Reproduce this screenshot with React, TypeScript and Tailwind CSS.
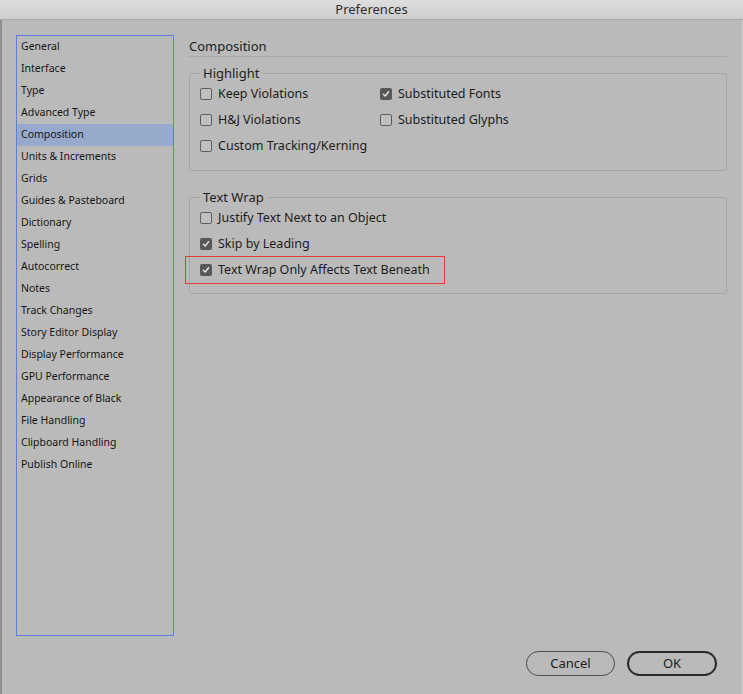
import React from 'react';

const sections = [
  'General',
  'Interface',
  'Type',
  'Advanced Type',
  'Composition',
  'Units & Increments',
  'Grids',
  'Guides & Pasteboard',
  'Dictionary',
  'Spelling',
  'Autocorrect',
  'Notes',
  'Track Changes',
  'Story Editor Display',
  'Display Performance',
  'GPU Performance',
  'Appearance of Black',
  'File Handling',
  'Clipboard Handling',
  'Publish Online',
];

const font = { fontFamily: '"Lucida Grande", "Noto Sans", "DejaVu Sans", sans-serif' };

function Checkbox({ checked }: { checked?: boolean }) {
  if (checked) {
    return (
      <span className="flex h-[12px] w-[12px] shrink-0 items-center justify-center rounded-[2px] bg-[#585858]">
        <svg width="8" height="8" viewBox="0 0 8 8" fill="none">
          <path d="M1.4 4.2 L3.2 6 L6.6 1.8" stroke="#e6e6e6" strokeWidth="1.4" strokeLinecap="round" strokeLinejoin="round" />
        </svg>
      </span>
    );
  }
  return <span className="h-[12px] w-[12px] shrink-0 rounded-[2px] border border-[#5e5e5e] bg-[#bfbfbf]" />;
}

function Option({ label, checked }: { label: string; checked?: boolean }) {
  return (
    <div className="flex h-[26px] items-center gap-[6px] text-[12.5px] text-[#1c1c1c]">
      <Checkbox checked={checked} />
      <span>{label}</span>
    </div>
  );
}

function Group({ title, children, className }: { title: string; children: React.ReactNode; className?: string }) {
  return (
    <fieldset className={`rounded-[3px] border border-[#a6a6a6] pl-[10px] ${className ?? ''}`}>
      <legend className="px-[3px] text-[13px] leading-[15px] text-[#1c1c1c]">{title}</legend>
      {children}
    </fieldset>
  );
}

export default function App() {
  return (
    <div className="flex h-[694px] w-[743px] flex-col bg-[#bababa]" style={font}>
      {/* title bar */}
      <div className="flex h-[20px] shrink-0 items-center justify-center border-b border-[#a9a9a9] bg-gradient-to-b from-[#dedede] to-[#cdcdcd] text-[13px] text-[#2e2e2e]">
        Preferences
      </div>

      <div className="flex flex-1 flex-col border-l-2 border-r border-l-[#8f8f8f] border-r-[#cfcfcf]">
        <div className="flex">
          {/* sidebar */}
          <div className="ml-[14px] mt-[15px] h-[601px] w-[158px] border border-[#5a7fdc]">
            {sections.map((s) => (
              <div
                key={s}
                className={`flex h-[22px] items-center pb-[1px] pl-[4px] text-[10.5px] text-[#161616] ${
                  s === 'Composition' ? 'bg-[#97aacb]' : ''
                }`}
              >
                {s}
              </div>
            ))}
          </div>

          {/* content */}
          <div className="ml-[15px] mt-[17px] w-[538px]">
            <div className="h-[20px] border-b border-[#a9a9a9] text-[13px] leading-[18px] text-[#1c1c1c]">Composition</div>

            <Group title="Highlight" className="mt-[9px] pb-[11px]">
              <div className="grid grid-cols-[180px_1fr]">
                <Option label="Keep Violations" />
                <Option label="Substituted Fonts" checked />
                <Option label="H&J Violations" />
                <Option label="Substituted Glyphs" />
                <Option label="Custom Tracking/Kerning" />
              </div>
            </Group>

            <Group title="Text Wrap" className="mt-[19px] pb-[10px]">
              <Option label="Justify Text Next to an Object" />
              <Option label="Skip by Leading" checked />
              <div className="relative">
                <Option label="Text Wrap Only Affects Text Beneath" checked />
                <div className="pointer-events-none absolute left-[-15px] top-[-1px] h-[28px] w-[260px] border border-solid border-[#e33b3b]" />
              </div>
            </Group>
          </div>
        </div>

        {/* footer buttons */}
        <div className="mt-auto flex justify-end gap-[12px] pb-[18px] pr-[25px]">
          <button className="h-[25px] w-[89px] rounded-full border border-[#4e4e4e] text-[13px] text-[#1c1c1c]">Cancel</button>
          <button className="h-[25px] w-[90px] rounded-full border-2 border-[#2c2c2c] text-[13px] text-[#1c1c1c]">OK</button>
        </div>
      </div>
    </div>
  );
}
